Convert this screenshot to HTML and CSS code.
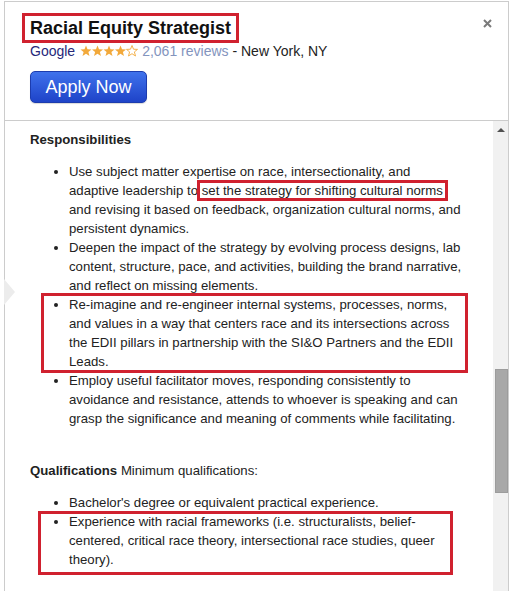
FILE: index.html
```html
<!DOCTYPE html>
<html>
<head>
<meta charset="utf-8">
<link rel="stylesheet" href="styles.css">
</head>
<body>
<div class="panel">
  <svg class="pointer" width="12" height="26" viewBox="0 0 12 26"><polygon points="0,0 11,13 0,26" fill="#ececec"/></svg>
  <header class="header">
    <div class="head-main">
      <h1 class="title">Racial Equity Strategist</h1>
      <div class="meta"><span class="company">Google</span><svg class="stars" width="58" height="12" viewBox="0 0 58 12">
          <defs>
            <polygon id="st" points="6,0.5 7.5,4.2 11.5,4.4 8.4,6.9 9.5,11 6,8.7 2.5,11 3.6,6.9 0.5,4.4 4.5,4.2"/>
            <clipPath id="half"><rect x="46" y="0" width="6" height="12"/></clipPath>
          </defs>
          <use href="#st" x="0" fill="#f2a93b"/>
          <use href="#st" x="11.5" fill="#f2a93b"/>
          <use href="#st" x="23" fill="#f2a93b"/>
          <use href="#st" x="34.5" fill="#f2a93b"/>
          <use href="#st" x="46" fill="none" stroke="#f2a93b" stroke-width="0.9"/>
          <use href="#st" x="46" fill="#f2a93b" clip-path="url(#half)"/>
        </svg><span class="reviews">2,061 reviews</span> - New York, NY</div>
      <button class="apply">Apply Now</button>
    </div>
    <svg class="close" width="9" height="9" viewBox="0 0 9 9"><path d="M1 1 L8 8 M8 1 L1 8" stroke="#7a7a7a" stroke-width="2"/></svg>
  </header>
  <div class="body">
    <div class="content">
      <h2 class="section-title">Responsibilities</h2>
      <ul class="list">
        <li>Use subject matter expertise on race, intersectionality, and<br>adaptive leadership to <span class="mark">set the strategy for shifting cultural norms</span><br>and revising it based on feedback, organization cultural norms, and<br>persistent dynamics.</li>
        <li>Deepen the impact of the strategy by evolving process designs, lab<br>content, structure, pace, and activities, building the brand narrative,<br>and reflect on missing elements.</li>
        <li class="boxed boxed-a">Re-imagine and re-engineer internal systems, processes, norms,<br>and values in a way that centers race and its intersections across<br>the EDII pillars in partnership with the SI&amp;O Partners and the EDII<br>Leads.</li>
        <li>Employ useful facilitator moves, responding consistently to<br>avoidance and resistance, attends to whoever is speaking and can<br>grasp the significance and meaning of comments while facilitating.</li>
      </ul>
      <p class="section-title second"><strong>Qualifications</strong> <span class="plain">Minimum qualifications:</span></p>
      <ul class="list">
        <li>Bachelor's degree or equivalent practical experience.</li>
        <li class="boxed boxed-b">Experience with racial frameworks (i.e. structuralists, belief-<br>centered, critical race theory, intersectional race studies, queer<br>theory).</li>
      </ul>
    </div>
    <div class="scrollbar">
      <div class="arrow"></div>
      <div class="thumb"></div>
    </div>
  </div>
</div>
</body>
</html>
```

FILE: styles.css
```css
html, body {
  margin: 0;
  padding: 0;
  background: #ffffff;
}
body {
  font-family: "Liberation Sans", Arial, sans-serif;
  color: #222222;
  width: 525px;
  height: 591px;
  overflow: hidden;
}
.panel {
  position: relative;
  margin: 1px 0 0 4px;
  width: 505px;
  height: 590px;
  box-sizing: border-box;
  border: 1px solid #cccccc;
  border-bottom: 0;
  display: flex;
  flex-direction: column;
}
.pointer {
  position: absolute;
  left: -1px;
  top: 277px;
}
.header {
  display: flex;
  justify-content: space-between;
  align-items: flex-start;
  padding: 11px 16px 17px 17px;
  border-bottom: 1px solid #cccccc;
}
.head-main {
  display: flex;
  flex-direction: column;
  align-items: flex-start;
}
.title {
  margin: 0;
  font-size: 18px;
  line-height: 24px;
  font-weight: bold;
  color: #111111;
  border: 3px solid #d0212f;
  padding: 0 5px;
}
.meta {
  margin-left: 8px;
  font-size: 14px;
  line-height: 16px;
  height: 16px;
  color: #222222;
  white-space: nowrap;
}
.company {
  color: #26287a;
}
.stars {
  margin: 0 4px 0 5px;
  vertical-align: -1px;
}
.reviews {
  color: #8394bd;
}
.apply {
  margin: 12px 0 0 8px;
  width: 117px;
  height: 32px;
  border: 1px solid #1c3cae;
  border-radius: 5px;
  background: linear-gradient(#3f72ec, #1e43c8);
  color: #ffffff;
  font-family: "Liberation Sans", Arial, sans-serif;
  font-size: 18px;
  padding: 0;
  box-shadow: 0 1px 1px rgba(0,0,0,0.15);
}
.close {
  margin-top: 6px;
}
.body {
  flex: 1;
  display: flex;
  min-height: 0;
}
.content {
  flex: 1;
  padding: 9px 22px 0 25px;
  overflow: hidden;
  font-size: 13.2px;
  line-height: 19px;
}
.section-title {
  margin: 0;
  font-size: 13.2px;
  line-height: 19px;
  font-weight: bold;
}
.section-title.second {
  margin-top: 33px;
  font-weight: normal;
}
.list {
  margin: 13px 0 0 0;
  padding-left: 39px;
}
.list li {
  position: relative;
  white-space: nowrap;
}
.mark {
  border: 3px solid #d0212f;
  padding: 0 2px;
  margin: 0 -5px;
}
.boxed::before {
  content: "";
  position: absolute;
  border: 3px solid #d0212f;
  pointer-events: none;
}
.boxed-a::before {
  left: -28px;
  right: 3px;
  top: -2px;
  bottom: -2px;
}
.boxed-b::before {
  left: -31px;
  right: 18px;
  top: -1px;
  bottom: -6px;
}
.scrollbar {
  width: 15px;
  background: #f1f1f1;
  display: flex;
  flex-direction: column;
  align-items: center;
}
.arrow {
  margin-top: 7px;
  width: 0;
  height: 0;
  border-left: 4px solid transparent;
  border-right: 4px solid transparent;
  border-bottom: 4px solid #505050;
}
.thumb {
  margin-top: 237px;
  margin-left: 1px;
  width: 13px;
  height: 124px;
  background: #a8a8a8;
  border: 1px solid #9c9c9c;
  box-sizing: border-box;
}
```
